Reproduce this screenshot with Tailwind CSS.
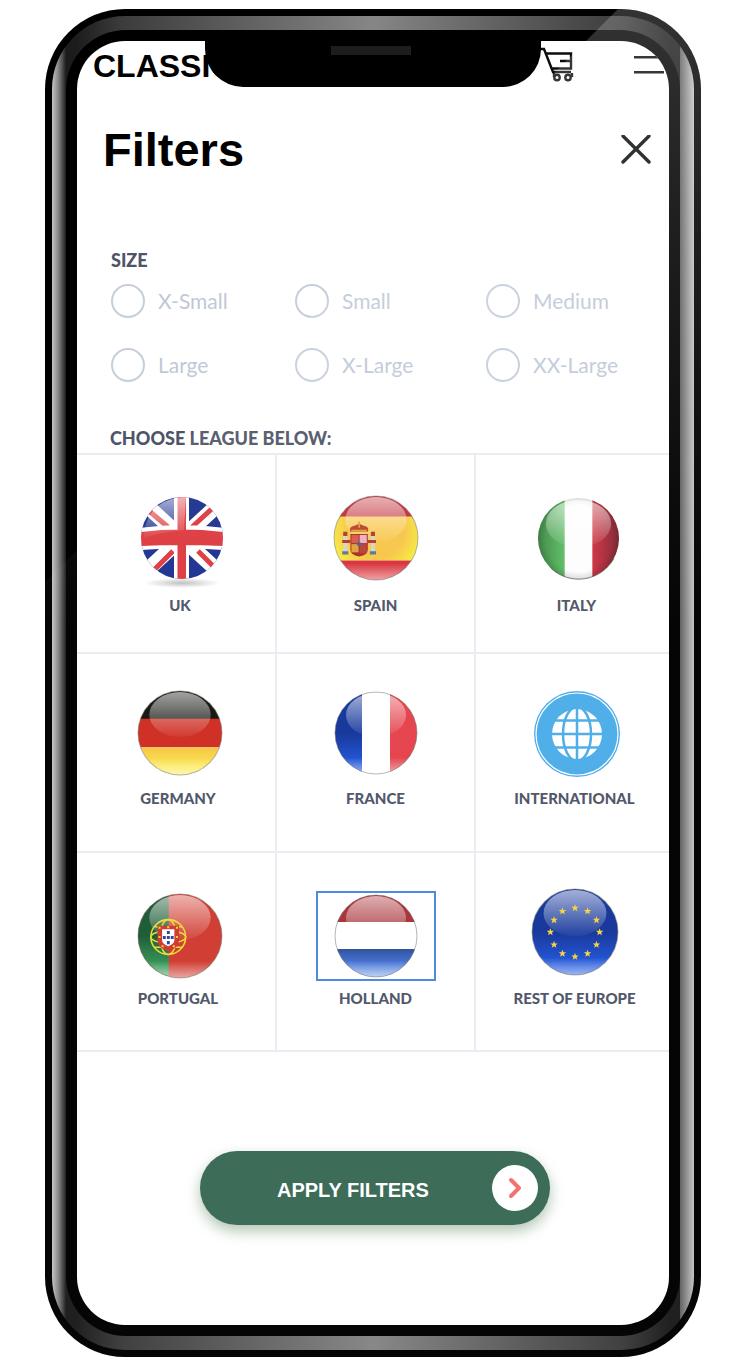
<!DOCTYPE html>
<html lang="en">
<head>
<meta charset="utf-8">
<meta name="viewport" content="width=device-width, initial-scale=1">
<title>Filters</title>
<script src="https://cdn.jsdelivr.net/npm/@tailwindcss/browser@4"></script>
</head>
<body class="bg-white font-[Lato,sans-serif] text-[#4f5568]">

<!-- Shared flag parts -->
<svg class="absolute size-0" aria-hidden="true">
  <defs>
    <clipPath id="disc"><circle cx="42" cy="42" r="41"/></clipPath>
    <linearGradient id="gloss" x1="0" y1="0" x2="0" y2="1">
      <stop offset="0" stop-color="#fff" stop-opacity=".6"/>
      <stop offset="1" stop-color="#fff" stop-opacity=".04"/>
    </linearGradient>
    <linearGradient id="floor" x1="0" y1="0" x2="0" y2="1">
      <stop offset=".8" stop-color="#fff" stop-opacity="0"/>
      <stop offset="1" stop-color="#fff" stop-opacity=".55"/>
    </linearGradient>
    <radialGradient id="ground">
      <stop offset="0" stop-color="#000" stop-opacity=".25"/>
      <stop offset="1" stop-color="#000" stop-opacity="0"/>
    </radialGradient>
    <radialGradient id="edge">
      <stop offset=".8" stop-color="#000" stop-opacity="0"/>
      <stop offset="1" stop-color="#000" stop-opacity=".15"/>
    </radialGradient>
    <linearGradient id="gold" x1="0" y1="0" x2="0" y2="1">
      <stop offset="0" stop-color="#f6c445"/><stop offset=".7" stop-color="#fbe94c"/>
    </linearGradient>
    <radialGradient id="yolk" gradientUnits="userSpaceOnUse" cx="42" cy="34" r="46">
      <stop offset=".6" stop-color="#f8c548"/><stop offset="1" stop-color="#f7ee3c"/>
    </radialGradient>
    <linearGradient id="royal" x1="0" y1="0" x2="0" y2="1">
      <stop offset=".5" stop-color="#14359a"/><stop offset=".9" stop-color="#2259e0"/>
    </linearGradient>
    <linearGradient id="sky" x1="0" y1="0" x2="0" y2="1">
      <stop offset="0" stop-color="#2b519b"/><stop offset=".5" stop-color="#4574d6"/><stop offset="1" stop-color="#6f9ae8"/>
    </linearGradient>
    <linearGradient id="leaf" x1="0" y1="0" x2="0" y2="1">
      <stop offset=".5" stop-color="#1c5b36"/><stop offset="1" stop-color="#43b268"/>
    </linearGradient>
    <linearGradient id="mint" x1="0" y1="0" x2="1" y2="0">
      <stop offset="0" stop-color="#3c8544"/><stop offset="1" stop-color="#5cbd63"/>
    </linearGradient>
    <linearGradient id="wine" x1="0" y1="0" x2="1" y2="0">
      <stop offset="0" stop-color="#cf3040"/><stop offset="1" stop-color="#7f2430"/>
    </linearGradient>
    <g id="shine">
      <ellipse cx="42" cy="24" rx="30" ry="22" fill="url(#gloss)"/>
      <circle cx="42" cy="42" r="41" fill="url(#floor)"/>
      <circle cx="42" cy="42" r="41" fill="none" stroke="#6b6b66" stroke-opacity=".5"/>
    </g>
    <path id="star" d="M0-3.600.9-1.100h2.600L1.500.6 2.200 3.100 0 1.600-2.200 3.100-1.500.6-3.500-1.100h2.600Z" fill="#f8d33c"/>
  </defs>
</svg>

<div class="relative mt-[9px] mr-[50px] mb-[9px] ml-[45px] rounded-[80px] bg-black p-[7px]">
  <div class="rounded-[73px] bg-[linear-gradient(90deg,#c4c4c4_0px,#8a8a8a_6px,#1c1c1c_14px,#1c1c1c_24px,#3c3c3c_70px,#868686_50%,#3c3c3c_calc(100%_-_70px),#1c1c1c_calc(100%_-_24px),#1c1c1c_calc(100%_-_14px),#606060_calc(100%_-_14px),#c4c4c4_100%)] p-[14px]">
    <div class="rounded-[60px] bg-black p-[11px]">
      <div class="relative overflow-hidden rounded-[48px] bg-white pb-[100px]">

        <header class="flex h-[46px] items-start justify-between pl-4">
          <a href="#" class="pt-[7px] font-['Liberation_Sans',sans-serif] text-[32px] leading-9 font-bold text-black">CLASSIC</a>
          <div class="flex items-start">
            <button type="button" aria-label="Cart" class="mr-[58px] pt-1.5">
              <svg class="block h-[36px] w-[38px]" viewBox="0 0 38 36" fill="none" stroke="#0c0c0c" stroke-width="2.400">
                <path d="M0 2h6l9 23h18M7 6.500h26v15H13M33 14H22"/>
                <path d="M16 26v4M34 26v4"/><circle cx="19" cy="30.500" r="2.700"/><circle cx="30" cy="30.500" r="2.700"/>
              </svg>
            </button>
            <button type="button" aria-label="Menu" class="pt-[15px]">
              <svg class="block h-[18px] w-[35px]" viewBox="0 0 35 18" stroke="#0c0c0c" stroke-width="2.400"><path d="M0 1.200h30M0 16.200h30"/></svg>
            </button>
          </div>
        </header>
        <!-- Notch -->
        <div class="absolute top-0 left-1/2 flex h-[46px] w-[336px] -translate-x-1/2 justify-center rounded-b-[38px] bg-black pt-[5px]">
          <div class="mr-1 h-[9px] w-20 bg-[#1d1d1d]"></div>
        </div>

        <main>
          <div class="mt-[39px] flex items-center justify-between pr-[18px] pl-[26px]">
            <h1 class="font-['Liberation_Sans',sans-serif] text-[47px] leading-[48px] font-bold text-black">Filters</h1>
            <button type="button" aria-label="Close">
              <svg class="block size-[30px]" viewBox="0 0 30 30" stroke="#0c0f0f" stroke-width="3.400" stroke-linecap="round"><path d="M2 1l26 26M28 1 2 27"/></svg>
            </button>
          </div>

          <form>
            <fieldset class="px-[34px] pt-[74px]">
              <legend class="contents text-[18px] leading-6 font-black"><span class="block">SIZE</span></legend>
              <div class="mt-3 grid grid-cols-[184fr_191fr_149fr] gap-y-[30px] text-[21px] leading-[34px] text-[#bfc8d8]">
                <label class="flex gap-[13px]"><input type="radio" name="size" class="size-[34px] shrink-0 appearance-none rounded-full border-2 border-[#c6cedc]">X-Small</label>
                <label class="flex gap-[13px]"><input type="radio" name="size" class="size-[34px] shrink-0 appearance-none rounded-full border-2 border-[#c6cedc]">Small</label>
                <label class="flex gap-[13px]"><input type="radio" name="size" class="size-[34px] shrink-0 appearance-none rounded-full border-2 border-[#c6cedc]">Medium</label>
                <label class="flex gap-[13px]"><input type="radio" name="size" class="size-[34px] shrink-0 appearance-none rounded-full border-2 border-[#c6cedc]">Large</label>
                <label class="flex gap-[13px]"><input type="radio" name="size" class="size-[34px] shrink-0 appearance-none rounded-full border-2 border-[#c6cedc]">X-Large</label>
                <label class="flex gap-[13px] whitespace-nowrap"><input type="radio" name="size" class="size-[34px] shrink-0 appearance-none rounded-full border-2 border-[#c6cedc]">XX-Large</label>
              </div>
            </fieldset>

            <h2 class="mt-11 px-[33px] text-[18px] leading-6 font-black">CHOOSE LEAGUE BELOW:</h2>

            <div class="mt-[3px] grid auto-rows-[199px] grid-cols-[200fr_199fr_193fr] border-t-2 border-[#e9ecf0] text-[15px] leading-5 font-black">
              <button type="button" class="flex flex-col items-center gap-3 border-r-2 border-b-2 border-[#e9ecf0] pt-[38px] pl-2">
                <span class="flex h-[90px] w-[120px] items-center justify-center pl-1">
                  <svg class="size-[84px] overflow-visible" viewBox="0 0 84 84">
                    <ellipse cx="42" cy="87" rx="38" ry="5" fill="url(#ground)"/>
                    <g clip-path="url(#disc)">
                      <path fill="#1c3090" d="M0 0h84v84H0z"/>
                      <path stroke="#fff" stroke-width="15" d="M4 7l76 70M80 7 4 77"/>
                      <path stroke="#dd3a3e" stroke-width="5" d="M8 14l20 17M76 9 52 31M8 80l25-25M58 55l22 22"/>
                      <path fill="#fff" d="M34 0h15v84H34zM0 32q42-6 84 0v22q-42-3-84 0z"/>
                      <path fill="#dd3a3e" d="M37.500 0h8.500v84h-8.500zM0 36q42-5 84 0v14q-42-2-84 0z"/>
                      <path fill="url(#gloss)" d="M4 42C4 18 20 1 46 1l-2 33Q20 36 4 42z"/>
                    </g>
                  </svg>
                </span>UK
              </button>
              <button type="button" class="flex flex-col items-center gap-3 border-r-2 border-b-2 border-[#e9ecf0] pt-[38px]">
                <span class="flex h-[90px] w-[120px] items-center justify-center">
                  <svg class="size-[86px]" viewBox="0 0 84 84">
                    <g clip-path="url(#disc)">
                      <path fill="#c32e38" d="M0 0h84v22H0z"/><path fill="url(#yolk)" d="M0 21h84v43H0z"/><path fill="#d92f38" d="M0 64h84v20H0z"/>
                    </g>
                    <use href="#shine"/>
                    <path fill="#a62b26" d="M17 38h17v15q0 6-8.500 7Q17 59 17 53z"/>
                    <path fill="#d65a4a" d="M18 39h7v8h-7z"/><path fill="#e8b0c0" d="M26 39h7v8h-7z"/><path fill="#e0a03a" d="M18 48h7v8h-7z"/><path fill="#b5422f" d="M26 48h7v9h-7z"/>
                    <circle cx="25.500" cy="48" r="2" fill="#4b5aa8"/>
                    <path fill="#b8442f" d="M17 36q-2-5 4-6l4.500-2 4.500 2q6 1 4 6z"/><path fill="#e5a036" d="M18 34h15v2H18zM24.700 26h1.600v6h-1.600z"/>
                    <path fill="#d8d4c4" d="M10 40h4v16h-4zM37 40h4v16h-4z"/><path fill="#b03a2c" d="M9 44h8v3H9zM34 44h8v3h-8zM10 36h4v4h-4zM37 36h4v4h-4z"/><path fill="#4e7c9c" d="M9 55h6v3H9zM36 55h6v3h-6z"/>
                  </svg>
                </span>SPAIN
              </button>
              <button type="button" class="flex flex-col items-center gap-3 border-b-2 border-[#e9ecf0] pt-[38px] pl-2">
                <span class="flex h-[90px] w-[120px] items-center justify-center pl-1">
                  <svg class="size-[83px]" viewBox="0 0 84 84">
                    <g clip-path="url(#disc)">
                      <path fill="#fdfdfd" d="M0 0h84v84H0z"/><path fill="url(#mint)" d="M0 0h28v84H0z"/><path fill="url(#wine)" d="M56 0h28v84H56z"/>
                      <circle cx="42" cy="42" r="42" fill="url(#edge)"/>
                    </g>
                    <ellipse cx="42" cy="27" rx="33" ry="24" fill="url(#gloss)"/>
                    <path d="M14 72a41 41 0 0 0 64-10" fill="none" stroke="#222" stroke-opacity=".6"/>
                  </svg>
                </span>ITALY
              </button>

              <button type="button" class="flex flex-col items-center gap-2.5 border-r-2 border-b-2 border-[#e9ecf0] pt-[34px] pl-1">
                <span class="flex h-[90px] w-[120px] items-center justify-center pl-1">
                  <svg class="size-[86px]" viewBox="0 0 84 84">
                    <g clip-path="url(#disc)"><path fill="#14150f" d="M0 0h84v29H0z"/><path fill="#ce2d22" d="M0 28h84v28H0z"/><path fill="url(#gold)" d="M0 56h84v28H0z"/></g>
                    <use href="#shine"/>
                  </svg>
                </span>GERMANY
              </button>
              <button type="button" class="flex flex-col items-center gap-2.5 border-r-2 border-b-2 border-[#e9ecf0] pt-[34px]">
                <span class="flex h-[90px] w-[120px] items-center justify-center">
                  <svg class="size-[84px]" viewBox="0 0 84 84">
                    <g clip-path="url(#disc)"><path fill="#fff" d="M0 0h84v84H0z"/><path fill="url(#royal)" d="M0 0h28v84H0z"/><path fill="#e4424c" d="M56 0h28v84H56z"/></g>
                    <use href="#shine"/>
                  </svg>
                </span>FRANCE
              </button>
              <button type="button" class="flex flex-col items-center gap-2.5 border-b-2 border-[#e9ecf0] pt-[34px] pl-1">
                <span class="flex h-[90px] w-[120px] items-center justify-center pl-1">
                  <svg class="size-[88px]" viewBox="0 0 88 88" fill="none">
                    <circle cx="44" cy="45" r="43" fill="#4dade9"/><circle cx="44" cy="45" r="41" stroke="#fff" stroke-width="1.200"/>
                    <circle cx="44" cy="45" r="25" fill="#fff"/>
                    <g stroke="#4dade9" stroke-width="2.500"><path d="M18 45h52M44 19v52M22 31.500h44M22 58.500h44"/><ellipse cx="44" cy="45" rx="14" ry="27"/></g>
                  </svg>
                </span>INTERNATIONAL
              </button>

              <button type="button" class="flex flex-col items-center gap-[7px] border-r-2 border-b-2 border-[#e9ecf0] pt-[38px] pl-1">
                <span class="flex h-[90px] w-[120px] items-center justify-center pl-1">
                  <svg class="size-[86px]" viewBox="0 0 84 84">
                    <g clip-path="url(#disc)"><path fill="#d03b30" d="M0 0h84v84H0z"/><path fill="url(#leaf)" d="M0 0h31v84H0z"/></g>
                    <use href="#shine"/>
                    <g fill="none" stroke="#e9dc35" stroke-width="1.500">
                      <circle cx="30.500" cy="43" r="17"/><ellipse cx="30.500" cy="43" rx="17" ry="6"/><ellipse cx="30.500" cy="43" rx="8" ry="17"/><path d="M17 33h27M17 53h27"/>
                    </g>
                    <path fill="#cf3830" d="M20 32h21v14q0 8-10.500 11Q20 54 20 46z"/>
                    <path fill="#fff" d="M24.500 35.500h12V46q0 4-6 6-6-2-6-6z"/>
                    <path fill="#2b4593" d="M29.200 37h2.800v3h-2.800zM29.200 42h2.800v3h-2.800zM29.200 47h2.800v3h-2.800zM25.300 42h2.800v3h-2.800zM33 42h2.800v3H33z"/>
                    <path fill="#e9dc35" d="M21 33h2v2h-2zM29.500 32.500h2v2h-2zM38 33h2v2h-2zM21 42h2v2h-2zM38 42h2v2h-2zM24 51h2v2h-2zM35 51h2v2h-2z"/>
                  </svg>
                </span>PORTUGAL
              </button>
              <button type="button" aria-pressed="true" class="flex flex-col items-center gap-[7px] border-r-2 border-b-2 border-[#e9ecf0] pt-[38px]">
                <span class="flex h-[90px] w-[120px] items-center justify-center border-2 border-[#4d87dc]">
                  <svg class="size-[84px]" viewBox="0 0 84 84">
                    <g clip-path="url(#disc)"><path fill="#fff" d="M0 0h84v84H0z"/><path fill="#a8333a" d="M0 0h84v28H0z"/><path fill="url(#sky)" d="M0 55h84v29H0z"/></g>
                    <use href="#shine"/>
                  </svg>
                </span>HOLLAND
              </button>
              <button type="button" class="flex flex-col items-center gap-[11px] border-b-2 border-[#e9ecf0] pt-[34px] pl-1">
                <span class="flex h-[90px] w-[120px] items-center justify-center">
                  <svg class="size-[88px]" viewBox="0 0 84 84">
                    <circle cx="42" cy="42" r="41" fill="url(#royal)"/>
                    <use href="#shine"/>
                    <use href="#star" x="42" y="19"/><use href="#star" x="54" y="22"/><use href="#star" x="62.500" y="30.500"/><use href="#star" x="65.500" y="42"/><use href="#star" x="62.500" y="54"/><use href="#star" x="54" y="62.500"/>
                    <use href="#star" x="42" y="65.500"/><use href="#star" x="30" y="62.500"/><use href="#star" x="22" y="54"/><use href="#star" x="18.500" y="42"/><use href="#star" x="22" y="30.500"/><use href="#star" x="30" y="22"/>
                  </svg>
                </span>REST OF EUROPE
              </button>
            </div>

            <div class="flex justify-center pt-[99px] pl-1">
              <button type="submit" class="flex h-[74px] w-[350px] items-center justify-between rounded-[37px] bg-[#396956] pr-3 pl-[77px] font-['Liberation_Sans',sans-serif] text-[20px] font-bold text-white shadow-[0_6px_14px_rgba(60,107,60,0.4)]">
                <span class="pt-1">APPLY FILTERS</span>
                <span class="flex size-[46px] items-center justify-center rounded-full bg-white">
                  <svg class="h-[22px] w-4" viewBox="0 0 16 22" fill="none" stroke="#f0716d" stroke-width="4" stroke-linecap="round" stroke-linejoin="round"><path d="M4 3l8 8-8 8"/></svg>
                </span>
              </button>
            </div>
          </form>
        </main>
      </div>
    </div>
  </div>
  <!-- Glass reflection -->
  <div class="pointer-events-none absolute inset-0 rounded-[80px] bg-[linear-gradient(180deg,rgba(255,255,255,0.2)_0px,rgba(255,255,255,0.13)_190px,rgba(255,255,255,0.05)_470px,rgba(255,255,255,0.02)_620px)] [clip-path:polygon(573px_0,100%_0,100%_100%,0_100%,0_573px)]"></div>
</div>
</body>
</html>
